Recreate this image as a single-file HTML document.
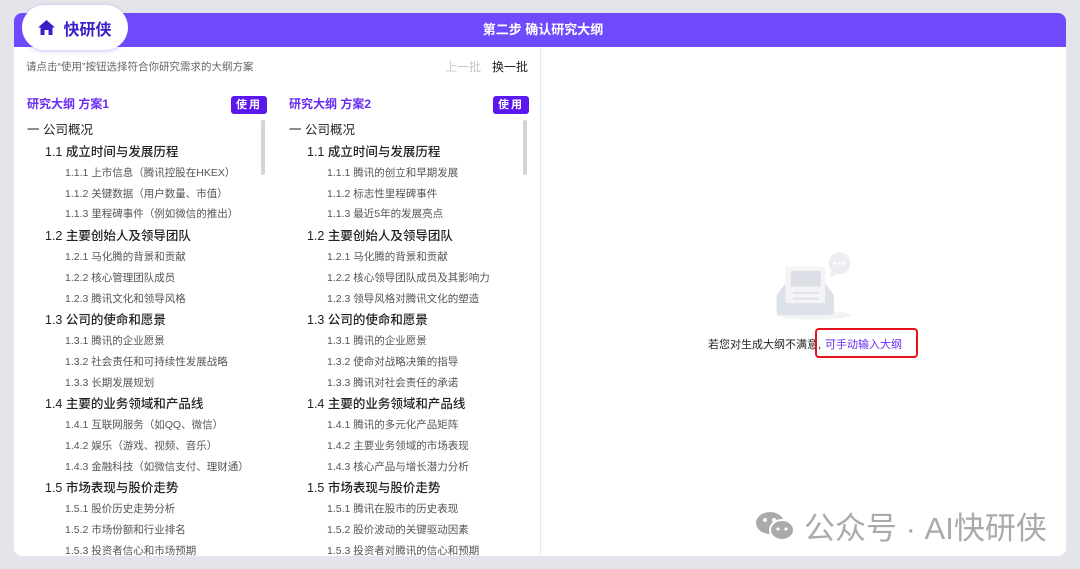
<!DOCTYPE html>
<html><head><meta charset="utf-8"><style>
*{margin:0;padding:0;box-sizing:border-box}
body{width:1080px;height:569px;background:#e4e5ea;font-family:"Liberation Sans","Noto Sans CJK SC",sans-serif;position:relative;overflow:hidden}
.card{position:absolute;left:14px;top:13px;width:1052px;height:543px;background:#fff;border-radius:8px;overflow:hidden}
.hdr{height:34px;background:#6f4bfd;color:#fff;font-size:13px;font-weight:bold;text-align:center;line-height:34px;padding-left:6px}
.logo{position:absolute;left:22px;top:5px;width:106px;height:45px;background:#fff;border-radius:23px;box-shadow:0 1px 4px rgba(110,75,253,.35);display:flex;align-items:center;justify-content:center;gap:8px;font-size:16px;font-weight:bold;color:#3d1fc9}
.div{position:absolute;left:526px;top:34px;width:1px;height:509px;background:#e8e8ee}
.tip{position:absolute;left:12px;top:46px;font-size:10.5px;color:#666}
.prev{position:absolute;left:431px;top:45px;font-size:12px;color:#c8c8c8}
.next{position:absolute;left:478px;top:45px;font-size:12px;color:#222}
.col{position:absolute;top:83px;width:240px}
.ttl{font-size:12px;font-weight:bold;color:#6a2cf2;height:23px;line-height:17px}
.use{position:absolute;right:0;top:0;background:#5b17ee;color:#fff;font-size:11px;font-weight:bold;width:36px;height:18px;line-height:18px;text-align:center;border-radius:3px;letter-spacing:2px}
.h1{font-size:12.5px;color:#222;line-height:22px}
.h2{font-size:12.5px;color:#222;line-height:22px;padding-left:18px;font-weight:500}
.h3{font-size:10.5px;color:#555;line-height:20.7px;padding-left:38px}
.sb{position:absolute;top:107px;width:4px;height:55px;background:#d4d4d8;border-radius:2px}
</style></head><body>
<div class="card">
<div class="hdr">第二步 确认研究大纲</div>
<div class="div"></div>
<div class="tip">请点击“使用”按钮选择符合你研究需求的大纲方案</div>
<div class="prev">上一批</div><div class="next">换一批</div>
<div class="col" style="left:13px"><div class="ttl">研究大纲 方案1</div><div class="use">使用</div>
<div class="h1">一 公司概况</div>
<div class="h2">1.1 成立时间与发展历程</div>
<div class="h3">1.1.1 上市信息（腾讯控股在HKEX）</div><div class="h3">1.1.2 关键数据（用户数量、市值）</div><div class="h3">1.1.3 里程碑事件（例如微信的推出）</div>
<div class="h2">1.2 主要创始人及领导团队</div>
<div class="h3">1.2.1 马化腾的背景和贡献</div><div class="h3">1.2.2 核心管理团队成员</div><div class="h3">1.2.3 腾讯文化和领导风格</div>
<div class="h2">1.3 公司的使命和愿景</div>
<div class="h3">1.3.1 腾讯的企业愿景</div><div class="h3">1.3.2 社会责任和可持续性发展战略</div><div class="h3">1.3.3 长期发展规划</div>
<div class="h2">1.4 主要的业务领域和产品线</div>
<div class="h3">1.4.1 互联网服务（如QQ、微信）</div><div class="h3">1.4.2 娱乐（游戏、视频、音乐）</div><div class="h3">1.4.3 金融科技（如微信支付、理财通）</div>
<div class="h2">1.5 市场表现与股价走势</div>
<div class="h3">1.5.1 股价历史走势分析</div><div class="h3">1.5.2 市场份额和行业排名</div><div class="h3">1.5.3 投资者信心和市场预期</div>
</div>
<div class="sb" style="left:247px"></div>
<div class="col" style="left:275px"><div class="ttl">研究大纲 方案2</div><div class="use">使用</div>
<div class="h1">一 公司概况</div>
<div class="h2">1.1 成立时间与发展历程</div>
<div class="h3">1.1.1 腾讯的创立和早期发展</div><div class="h3">1.1.2 标志性里程碑事件</div><div class="h3">1.1.3 最近5年的发展亮点</div>
<div class="h2">1.2 主要创始人及领导团队</div>
<div class="h3">1.2.1 马化腾的背景和贡献</div><div class="h3">1.2.2 核心领导团队成员及其影响力</div><div class="h3">1.2.3 领导风格对腾讯文化的塑造</div>
<div class="h2">1.3 公司的使命和愿景</div>
<div class="h3">1.3.1 腾讯的企业愿景</div><div class="h3">1.3.2 使命对战略决策的指导</div><div class="h3">1.3.3 腾讯对社会责任的承诺</div>
<div class="h2">1.4 主要的业务领域和产品线</div>
<div class="h3">1.4.1 腾讯的多元化产品矩阵</div><div class="h3">1.4.2 主要业务领域的市场表现</div><div class="h3">1.4.3 核心产品与增长潜力分析</div>
<div class="h2">1.5 市场表现与股价走势</div>
<div class="h3">1.5.1 腾讯在股市的历史表现</div><div class="h3">1.5.2 股价波动的关键驱动因素</div><div class="h3">1.5.3 投资者对腾讯的信心和预期</div>
</div>
<div class="sb" style="left:509px"></div>
<svg style="position:absolute;left:749px;top:226px" width="100" height="85" viewBox="0 0 90 77">
<ellipse cx="46" cy="69" rx="34" ry="4" fill="#f2f3f5"/>
<rect x="20" y="25" width="36" height="36" fill="#f4f4f6"/>
<rect x="25" y="29" width="27" height="14" fill="#dcdfe6"/>
<line x1="27" y1="49" x2="50" y2="49" stroke="#dcdfe6" stroke-width="1.5"/>
<line x1="27" y1="54" x2="50" y2="54" stroke="#dcdfe6" stroke-width="1.5"/>
<path d="M12 51 L20 40 L20 58 L56 58 L56 40 L64 51 L64 66 Q64 69 61 69 L15 69 Q12 69 12 66Z" fill="#dde1e8"/>
<circle cx="69" cy="22" r="10" fill="#eceef2"/><path d="M62 28 L60 35 L67 31Z" fill="#eceef2"/>
<circle cx="65" cy="22" r="1.3" fill="#fff"/><circle cx="69" cy="22" r="1.3" fill="#fff"/><circle cx="73" cy="22" r="1.3" fill="#fff"/>
</svg>
<div style="position:absolute;left:694px;top:323px;font-size:11px;color:#222">若您对生成大纲不满意,</div>
<div style="position:absolute;left:801px;top:315px;width:103px;height:30px;border:2px solid #e8121e;border-radius:4px"></div>
<div style="position:absolute;left:811px;top:323px;font-size:11px;color:#6a2cf2">可手动输入大纲</div>
<div style="position:absolute;left:740px;top:490px;font-size:31px;color:#aaa;display:flex;align-items:center;gap:8px">
<svg width="42" height="34" viewBox="0 0 42 32"><ellipse cx="16" cy="13" rx="14" ry="11" fill="#aaa"/><ellipse cx="28" cy="20" rx="12" ry="10" fill="#aaa" stroke="#fff" stroke-width="2"/><circle cx="11" cy="10" r="2" fill="#fff"/><circle cx="20" cy="10" r="2" fill="#fff"/><circle cx="24" cy="19" r="1.6" fill="#fff"/><circle cx="32" cy="19" r="1.6" fill="#fff"/></svg>公众号 · AI快研侠</div>
</div>
<div class="logo"><svg width="17" height="15" viewBox="0 0 17 15"><path d="M8.5 0 L17 7.5 L14.5 7.5 L14.5 15 L10.5 15 L10.5 10 L6.5 10 L6.5 15 L2.5 15 L2.5 7.5 L0 7.5Z" fill="#3d1fc9"/></svg>快研侠</div>
</body></html>
